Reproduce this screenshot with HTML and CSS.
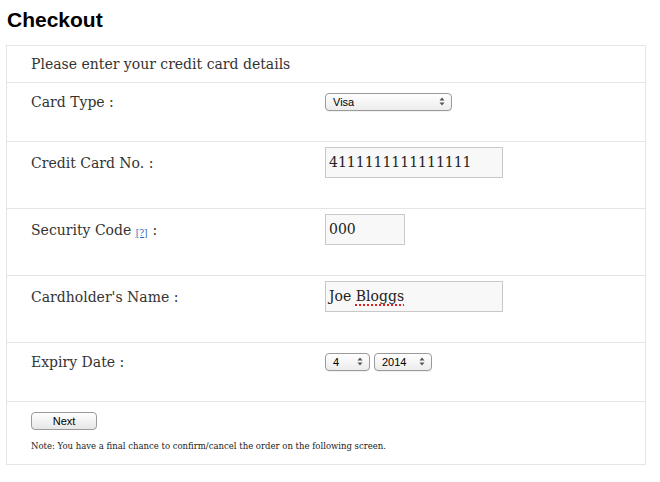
FILE: index.html
```html
<!DOCTYPE html>
<html>
<head>
<meta charset="utf-8">
<title>Checkout</title>
<link rel="stylesheet" href="styles.css">
</head>
<body>
<h1 class="title">Checkout</h1>
<div class="panel">
  <div class="intro">Please enter your credit card details</div>

  <div class="row row-short">
    <div class="label">Card Type :</div>
    <div class="control">
      <div class="select select-card"><span>Visa</span>
        <svg class="arrows" width="6" height="9" viewBox="0 0 6 9"><path d="M3 0.5 L5.5 3.5 H0.5 Z M3 8.5 L5.5 5.5 H0.5 Z" fill="#555"/></svg>
      </div>
    </div>
  </div>

  <div class="row">
    <div class="label">Credit Card No. :</div>
    <div class="control"><div class="field field-wide">4111111111111111</div></div>
  </div>

  <div class="row">
    <div class="label"><span>Security Code <a class="help" href="#">[?]</a>:</span></div>
    <div class="control"><div class="field field-small">000</div></div>
  </div>

  <div class="row">
    <div class="label">Cardholder's Name :</div>
    <div class="control"><div class="field field-wide">Joe <span class="spell">Bloggs</span></div></div>
  </div>

  <div class="row row-short">
    <div class="label">Expiry Date :</div>
    <div class="control">
      <div class="select select-month"><span>4</span>
        <svg class="arrows" width="6" height="9" viewBox="0 0 6 9"><path d="M3 0.5 L5.5 3.5 H0.5 Z M3 8.5 L5.5 5.5 H0.5 Z" fill="#555"/></svg>
      </div>
      <div class="select select-year"><span>2014</span>
        <svg class="arrows" width="6" height="9" viewBox="0 0 6 9"><path d="M3 0.5 L5.5 3.5 H0.5 Z M3 8.5 L5.5 5.5 H0.5 Z" fill="#555"/></svg>
      </div>
    </div>
  </div>

  <div class="footer">
    <button class="btn" type="button">Next</button>
    <p class="note">Note: You have a final chance to confirm/cancel the order on the following screen.</p>
  </div>
</div>
</body>
</html>
```
FILE: styles.css
```css
html, body {
  margin: 0;
  padding: 0;
  background: #fff;
}
body {
  padding: 0 14px 0 6px;
  font-family: "DejaVu Serif", "Liberation Serif", serif;
  color: #333;
}
.title {
  margin: 0 0 11px 1px;
  padding-top: 6px;
  font-family: "Liberation Sans", Arial, sans-serif;
  font-weight: bold;
  font-size: 21px;
  line-height: 28px;
  color: #000;
}
.panel {
  width: 640px;
  box-sizing: border-box;
  border: 1px solid #e5e5e5;
}
.intro {
  height: 37px;
  box-sizing: border-box;
  border-bottom: 1px solid #e5e5e5;
  padding-left: 24px;
  display: flex;
  align-items: center;
  font-size: 14px;
}
.row {
  height: 67px;
  box-sizing: border-box;
  border-bottom: 1px solid #e5e5e5;
  padding: 5px 0 0 24px;
  display: grid;
  grid-template-columns: 294px 1fr;
  align-items: start;
}
.row-short {
  height: 59px;
}
.label {
  font-size: 14px;
  height: 31px;
  display: flex;
  align-items: center;
}
.row-short .label {
  height: 27px;
}
.help {
  font-size: 9px;
  color: #2a6ebb;
  text-decoration: underline;
  margin: 0 5px 0 0;
  position: relative;
  top: 1px;
}
.control {
  display: flex;
  align-items: center;
  gap: 4px;
  height: 31px;
}
.row-short .control {
  height: 27px;
}
.field {
  height: 31px;
  box-sizing: border-box;
  border: 1px solid #c8c8c8;
  background: #f8f8f8;
  padding: 0 3px;
  line-height: 28px;
  font-size: 14px;
  color: #222;
  white-space: nowrap;
}
.field-wide { width: 178px; }
.field-small { width: 80px; }
.spell {
  text-decoration: underline dotted #e02020;
  text-decoration-thickness: 2px;
  text-underline-offset: 3px;
}
.select {
  height: 18px;
  box-sizing: border-box;
  border: 1px solid #9a9a9a;
  border-radius: 4px;
  background: linear-gradient(#ffffff, #ececec);
  display: flex;
  align-items: center;
  justify-content: space-between;
  padding: 0 6px 0 7px;
  font-family: "Liberation Sans", Arial, sans-serif;
  font-size: 11px;
  color: #000;
  box-shadow: 0 1px 0 rgba(0,0,0,0.05);
}
.select-card { width: 127px; }
.select-month { width: 45px; }
.select-year { width: 58px; }
.arrows { display: block; }
.footer {
  height: 62px;
  box-sizing: border-box;
  padding: 10px 0 0 24px;
}
.btn {
  display: block;
  width: 66px;
  height: 18px;
  box-sizing: border-box;
  border: 1px solid #9a9a9a;
  border-radius: 4px;
  background: linear-gradient(#ffffff, #e6e6e6);
  font-family: "Liberation Sans", Arial, sans-serif;
  font-size: 11px;
  color: #000;
  padding: 0;
  margin: 0;
}
.note {
  margin: 11px 0 0 0;
  font-size: 8.5px;
  color: #222;
}
```
